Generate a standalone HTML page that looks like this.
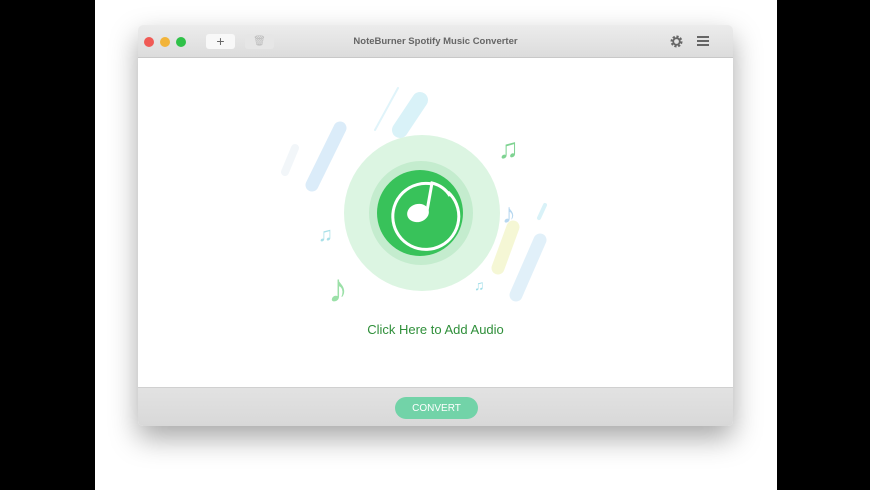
<!DOCTYPE html>
<html><head><meta charset="utf-8"><style>
body{margin:0;width:870px;height:490px;background:#000;position:relative;overflow:hidden;font-family:"Liberation Sans",sans-serif}
.bg{position:absolute;left:95px;top:0;width:682px;height:490px;background:#fff}
.win{position:absolute;left:138px;top:25px;width:595px;height:401px;background:#fff;border-radius:5px;box-shadow:0 12px 28px rgba(0,0,0,.35);overflow:hidden}
.tb{position:absolute;left:0;top:0;width:100%;height:32px;background:linear-gradient(#ececec,#dcdcdc);border-bottom:1px solid #c8c8c8}
.dot{position:absolute;top:12px;width:10px;height:10px;border-radius:50%}
.btn{position:absolute;top:9px;width:29px;height:15px;border-radius:3px;background:#f8f8f8;color:#666;font-size:14px;text-align:center;line-height:15px}
.title{position:absolute;top:0;left:0;width:100%;text-align:center;line-height:33px;font-size:9.5px;font-weight:bold;color:#666}
.bb{position:absolute;left:0;top:362px;width:100%;height:39px;background:linear-gradient(#e2e2e2,#d8d8d8);border-top:1px solid #d0d0d0}
.cv{position:absolute;left:257px;top:9px;width:83px;height:22px;border-radius:11px;background:#72d3a8;color:#fff;font-size:10px;text-align:center;line-height:24px}
</style></head><body>
<div class="bg"></div>
<div class="win">
<div class="tb">
<div class="dot" style="left:6px;background:#f05a55"></div>
<div class="dot" style="left:22px;background:#f2b43a"></div>
<div class="dot" style="left:38px;background:#2fc148"></div>
<div class="btn" style="left:68px">+</div>
<div class="btn" style="left:107px;background:#e6e6e6;color:#bbb;font-size:10px">🗑</div>
<div class="title">NoteBurner Spotify Music Converter</div>
<svg style="position:absolute;left:532px;top:10px" width="13" height="13" viewBox="0 0 13 13"><circle cx="6.5" cy="6.5" r="4.5" fill="none" stroke="#666" stroke-width="3" stroke-dasharray="2 1.5"/><circle cx="6.5" cy="6.5" r="3.3" fill="none" stroke="#666" stroke-width="1.8"/></svg>
<svg style="position:absolute;left:559px;top:11px" width="12" height="10"><rect y="0" width="12" height="2" fill="#666"/><rect y="4" width="12" height="2" fill="#666"/><rect y="8" width="12" height="2" fill="#666"/></svg>
</div>
<svg style="position:absolute;left:0;top:0" width="595" height="362">
<g transform="translate(-138,-25)">
<g stroke-linecap="round" fill="none" opacity="0.75">
<line x1="340" y1="128" x2="312" y2="185" stroke="#cfe6f7" stroke-width="13"/>
<line x1="420" y1="100" x2="400" y2="130" stroke="#cdeef6" stroke-width="16"/>
<line x1="398" y1="88" x2="375" y2="130" stroke="#d6f0f8" stroke-width="2"/>
<line x1="295" y1="148" x2="285" y2="172" stroke="#eef4f8" stroke-width="8"/>
<line x1="513" y1="227" x2="498" y2="268" stroke="#f2f5c8" stroke-width="13"/>
<line x1="540" y1="240" x2="516" y2="295" stroke="#d8ecf8" stroke-width="13"/>
<line x1="545" y1="205" x2="539" y2="218" stroke="#cdeef6" stroke-width="4"/>
</g>
<circle cx="422" cy="213" r="78" fill="#dcf5e2"/>
<circle cx="421" cy="213" r="52" fill="#c4ecce"/>
<circle cx="420" cy="213" r="43" fill="#38c25a"/>
<path d="M448 192 A33 33 0 1 1 432 184" fill="none" stroke="#fff" stroke-width="3"/>
<ellipse cx="418" cy="213" rx="11" ry="9" fill="#fff" transform="rotate(-15 418 213)"/>
<path d="M427 211 L432 183 Q444 186 450 196" fill="none" stroke="#fff" stroke-width="3"/>
<text x="498" y="158" font-size="28" fill="#7fd392">♫</text>
<text x="328" y="302" font-size="40" fill="#9be0a8">♪</text>
<text x="318" y="241" font-size="20" fill="#a8e0e8">♫</text>
<text x="502" y="223" font-size="28" fill="#b8d8f0">♪</text>
<text x="474" y="290" font-size="14" fill="#9fdde8">♫</text>
</g>
</svg>
<div style="position:absolute;left:0;top:297px;width:595px;text-align:center;font-size:13px;color:#2f8f3a">Click Here to Add Audio</div>
<div class="bb"><div class="cv">CONVERT</div></div>
</div>
</body></html>
